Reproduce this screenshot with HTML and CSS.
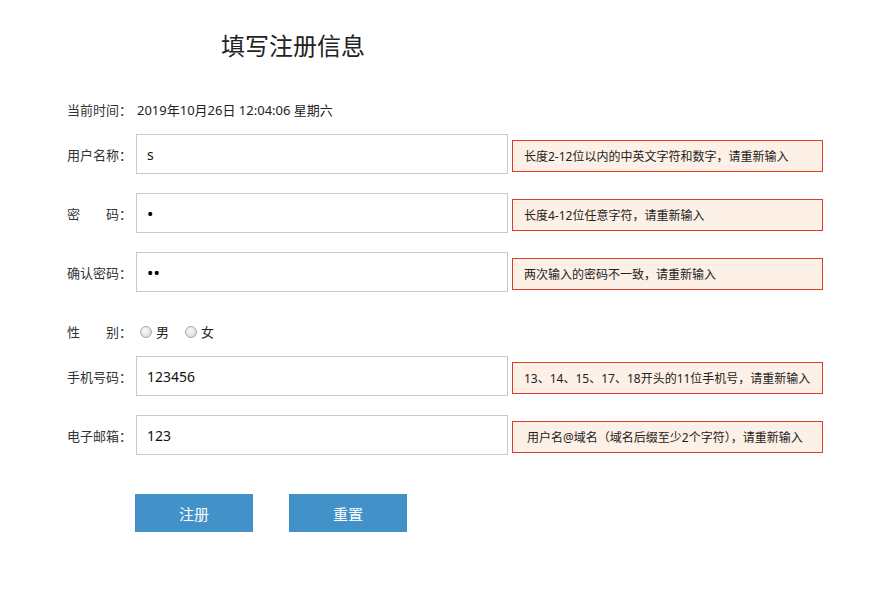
FILE: index.html
```html
<!DOCTYPE html>
<html lang="zh-CN">
<head>
<meta charset="utf-8">
<title>填写注册信息</title>
<link rel="stylesheet" href="styles.css">
</head>
<body>
<div class="page">
  <h1 class="title">填写注册信息</h1>
  <form class="form">
    <div class="row text-row">
      <span class="label">当前时间：</span>
      <span class="now">2019年10月26日 12:04:06 星期六</span>
    </div>
    <div class="row field-row">
      <span class="label">用户名称：</span>
      <input class="field" type="text" value="s">
      <span class="tip">长度2-12位以内的中英文字符和数字，请重新输入</span>
    </div>
    <div class="row field-row">
      <span class="label">密　　码：</span>
      <input class="field field-pass" type="password" value="1">
      <span class="tip">长度4-12位任意字符，请重新输入</span>
    </div>
    <div class="row field-row">
      <span class="label">确认密码：</span>
      <input class="field field-pass" type="password" value="12">
      <span class="tip">两次输入的密码不一致，请重新输入</span>
    </div>
    <div class="row text-row">
      <span class="label">性　　别：</span>
      <label class="radio"><input type="radio" name="sex"><span>男</span></label>
      <label class="radio"><input type="radio" name="sex"><span>女</span></label>
    </div>
    <div class="row field-row">
      <span class="label">手机号码：</span>
      <input class="field" type="text" value="123456">
      <span class="tip">13、14、15、17、18开头的11位手机号，请重新输入</span>
    </div>
    <div class="row field-row">
      <span class="label">电子邮箱：</span>
      <input class="field" type="text" value="123">
      <span class="tip tip-wide">用户名@域名（域名后缀至少2个字符），请重新输入</span>
    </div>
    <div class="buttons">
      <button type="button" class="btn">注册</button>
      <button type="button" class="btn">重置</button>
    </div>
  </form>
</div>
</body>
</html>
```
FILE: styles.css
```css
html, body {
  margin: 0;
  padding: 0;
  background: #fff;
}
body {
  font-family: "Noto Sans", "Noto Sans CJK SC", sans-serif;
  color: #222;
}
.page {
  padding: 30px 0 0 67px;
}
.title {
  margin: 0;
  width: 452px;
  text-align: center;
  font-family: "Noto Sans CJK SC", sans-serif;
  font-size: 24px;
  font-weight: normal;
  line-height: 30px;
  color: #222;
}
.form {
  margin-top: 29px;
}
.row {
  display: flex;
  align-items: center;
  height: 40px;
}
.text-row {
  margin-bottom: 5px;
}
.field-row {
  margin-bottom: 19px;
}
.label {
  width: 69px;
  font-size: 13px;
  color: #333;
  white-space: nowrap;
  flex: none;
}
.now {
  font-size: 13px;
  margin-left: 1px;
  color: #222;
}
.field {
  box-sizing: border-box;
  width: 372px;
  height: 40px;
  margin: 0;
  padding: 0 10px;
  border: 1px solid #c9c9c9;
  font-family: "Noto Sans", "Noto Sans CJK SC", sans-serif;
  font-size: 14px;
  color: #111;
  outline: none;
  flex: none;
}
.field-pass {
  font-size: 17px;
  color: #000;
}
.tip {
  box-sizing: border-box;
  width: 311px;
  height: 32px;
  margin: 4px 0 0 4px;
  padding-left: 11px;
  display: flex;
  align-items: center;
  border: 1px solid #dc3d26;
  background: #fdf0e6;
  font-size: 12px;
  color: #222;
  white-space: nowrap;
  flex: none;
}
.tip-wide {
  padding-left: 14px;
}
.radio {
  display: flex;
  align-items: center;
  font-size: 13px;
  color: #222;
  margin-right: 16px;
  margin-left: 4px;
}
.radio + .radio {
  margin-left: 0;
}
.radio input {
  appearance: none;
  -webkit-appearance: none;
  width: 12px;
  height: 12px;
  margin: 2px 4px 0 0;
  border: 1px solid #a9a9a9;
  border-radius: 50%;
  background: radial-gradient(circle at 40% 35%, #fafafa 0%, #e4e4e4 55%, #c9c9c9 100%);
  box-sizing: border-box;
}
.buttons {
  display: flex;
  gap: 36px;
  margin-top: 39px;
  padding-left: 68px;
}
.btn {
  width: 118px;
  height: 38px;
  border: none;
  background: #4292c9;
  color: #fff;
  font-family: "Noto Sans CJK SC", sans-serif;
  font-size: 15px;
  cursor: pointer;
}
```
